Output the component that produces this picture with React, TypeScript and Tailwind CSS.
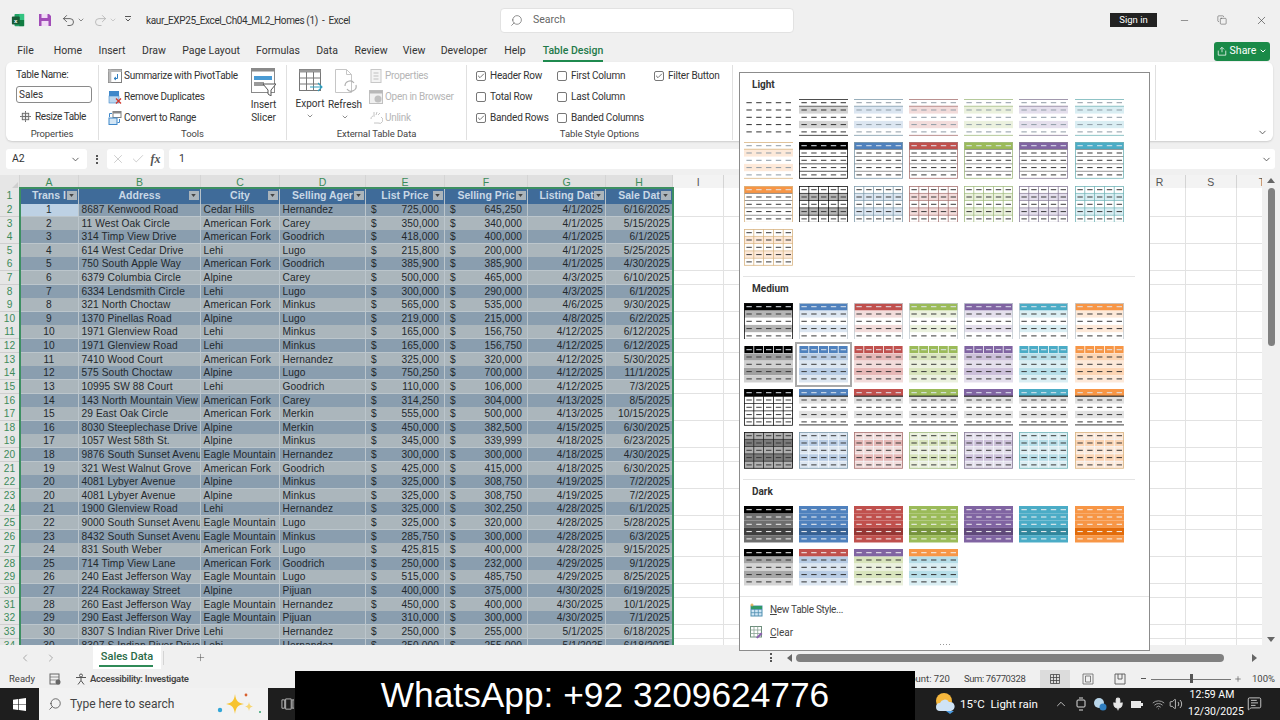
import { ChevronDown, ChevronLeft, ChevronRight, Check, Minus, Plus, Search, Undo2, Redo2, X, Copy, ChevronUp, Mic, Volume2, Wifi, MessageSquareText } from 'lucide-react';

type Row = [string, string, string, string, string, string, string, string];

const rows: Row[] = [
  ['1', '8687 Kenwood Road', 'Cedar Hills', 'Hernandez', '725,000', '645,250', '4/1/2025', '6/16/2025'],
  ['2', '11 West Oak Circle', 'American Fork', 'Carey', '350,000', '340,000', '4/1/2025', '5/15/2025'],
  ['3', '314 Timp View Drive', 'American Fork', 'Goodrich', '418,000', '400,000', '4/1/2025', '6/1/2025'],
  ['4', '614 West Cedar Drive', 'Lehi', 'Lugo', '215,800', '200,000', '4/1/2025', '5/25/2025'],
  ['5', '750 South Apple Way', 'American Fork', 'Goodrich', '385,900', '385,900', '4/1/2025', '4/30/2025'],
  ['6', '6379 Columbia Circle', 'Alpine', 'Carey', '500,000', '465,000', '4/3/2025', '6/10/2025'],
  ['7', '6334 Lendsmith Circle', 'Lehi', 'Lugo', '300,000', '290,000', '4/3/2025', '6/1/2025'],
  ['8', '321 North Choctaw', 'American Fork', 'Minkus', '565,000', '535,000', '4/6/2025', '9/30/2025'],
  ['9', '1370 Pinellas Road', 'Alpine', 'Lugo', '219,000', '215,000', '4/8/2025', '6/2/2025'],
  ['10', '1971 Glenview Road', 'Lehi', 'Minkus', '165,000', '156,750', '4/12/2025', '6/12/2025'],
  ['10', '1971 Glenview Road', 'Lehi', 'Minkus', '165,000', '156,750', '4/12/2025', '6/12/2025'],
  ['11', '7410 Wood Court', 'American Fork', 'Hernandez', '325,000', '320,000', '4/12/2025', '5/30/2025'],
  ['12', '575 South Choctaw', 'Alpine', 'Lugo', '750,250', '700,000', '4/12/2025', '11/1/2025'],
  ['13', '10995 SW 88 Court', 'Lehi', 'Goodrich', '110,000', '106,000', '4/12/2025', '7/3/2025'],
  ['14', '143 North Mountain View', 'American Fork', 'Carey', '314,250', '304,000', '4/13/2025', '8/5/2025'],
  ['15', '29 East Oak Circle', 'American Fork', 'Merkin', '555,000', '500,000', '4/13/2025', '10/15/2025'],
  ['16', '8030 Steeplechase Drive', 'Alpine', 'Merkin', '450,000', '382,500', '4/15/2025', '6/30/2025'],
  ['17', '1057 West 58th St.', 'Alpine', 'Minkus', '345,000', '339,999', '4/18/2025', '6/23/2025'],
  ['18', '9876 South Sunset Avenue', 'Eagle Mountain', 'Hernandez', '300,000', '300,000', '4/18/2025', '4/30/2025'],
  ['19', '321 West Walnut Grove', 'American Fork', 'Goodrich', '425,000', '415,000', '4/18/2025', '6/30/2025'],
  ['20', '4081 Lybyer Avenue', 'Alpine', 'Minkus', '325,000', '308,750', '4/19/2025', '7/2/2025'],
  ['20', '4081 Lybyer Avenue', 'Alpine', 'Minkus', '325,000', '308,750', '4/19/2025', '7/2/2025'],
  ['21', '1900 Glenview Road', 'Lehi', 'Hernandez', '325,000', '302,250', '4/28/2025', '6/1/2025'],
  ['22', '9000 South Sunset Avenue', 'Eagle Mountain', 'Lugo', '325,000', '320,000', '4/28/2025', '5/28/2025'],
  ['23', '8432 South Sunset Avenue', 'Eagle Mountain', 'Minkus', '285,750', '300,000', '4/28/2025', '6/3/2025'],
  ['24', '831 South Weber', 'American Fork', 'Lugo', '425,815', '400,000', '4/28/2025', '9/15/2025'],
  ['25', '714 Timp View Lane', 'American Fork', 'Goodrich', '250,000', '232,000', '4/29/2025', '9/1/2025'],
  ['26', '240 East Jefferson Way', 'Eagle Mountain', 'Lugo', '515,000', '485,750', '4/29/2025', '8/25/2025'],
  ['27', '224 Rockaway Street', 'Alpine', 'Pijuan', '400,000', '375,000', '4/30/2025', '6/19/2025'],
  ['28', '260 East Jefferson Way', 'Eagle Mountain', 'Hernandez', '450,000', '400,000', '4/30/2025', '10/1/2025'],
  ['29', '290 East Jefferson Way', 'Eagle Mountain', 'Pijuan', '310,000', '300,000', '4/30/2025', '7/1/2025'],
  ['30', '8307 S Indian River Drive', 'Lehi', 'Hernandez', '250,000', '255,000', '5/1/2025', '6/18/2025'],
  ['30', '8307 S Indian River Drive', 'Lehi', 'Hernandez', '250,000', '255,000', '5/1/2025', '6/18/2025'],
];

const gridCols = 'grid grid-cols-[20px_59px_122px_79px_86px_79px_83px_78px_67px_repeat(12,51.27px)]';
const emptyCols = Array.from({ length: 12 }, (_, i) => i);

/* ---------- table style thumbnails ---------- */

type Kind = 'plain' | 'lightBand' | 'lightHead' | 'lightGrid' | 'blackGrid' | 'medBand' | 'medCell' | 'medTop' | 'medGrid' | 'dark' | 'darkAlt';
type Accent = 'black' | 'blue' | 'red' | 'green' | 'purple' | 'teal' | 'orange';

const palette: Record<Accent, { main: string; tint: string; deep: string; body: string; band: string; edge: string }> = {
  black: { main: '#000000', tint: '#d4d4d4', deep: '#a6a6a6', body: '#6e6e6e', band: '#3f3f3f', edge: '#111111' },
  blue: { main: '#4f81bd', tint: '#dce6f1', deep: '#b8cce4', body: '#4f81bd', band: '#366092', edge: '#7f9aaa' },
  red: { main: '#c0504d', tint: '#f2dcdb', deep: '#e6b8b7', body: '#c0504d', band: '#963634', edge: '#a87573' },
  green: { main: '#9bbb59', tint: '#ebf1de', deep: '#d8e4bc', body: '#9bbb59', band: '#76933c', edge: '#a3bc82' },
  purple: { main: '#8064a2', tint: '#e4dfec', deep: '#ccc0da', body: '#8064a2', band: '#60497a', edge: '#8a7f99' },
  teal: { main: '#4bacc6', tint: '#daeef3', deep: '#b7dee8', body: '#4bacc6', band: '#31869b', edge: '#74b5b8' },
  orange: { main: '#f79646', tint: '#fde9d9', deep: '#fcd5b4', body: '#f79646', band: '#e26b0a', edge: '#d9b583' },
};

const rowY = [0, 7.3, 14.6, 21.9, 29.2];
const dashX = [2.4, 12.2, 22, 31.8, 41.6];

function Thumb({ kind, accent, headOverride, bodyOverride }: { kind: Kind; accent: Accent; headOverride?: Accent; bodyOverride?: Accent }) {
  const p = palette[accent];
  const head = palette[headOverride ?? accent].main;
  const b = palette[bodyOverride ?? accent];
  const isBlack = accent === 'black';
  const outline = p.edge;
  const parts: React.ReactNode[] = [];

  const fill = (i: number, color: string) =>
    parts.push(<rect key={`f${i}-${color}`} x="0" y={rowY[i]} width="49" height="7.3" fill={color} />);

  let dash = '#3a3a3a';
  let headDash = '#dfe7ef';

  if (kind === 'lightBand') {
    fill(1, p.tint);
    fill(3, p.tint);
    dash = isBlack ? '#333333' : '#8f9ca6';
    headDash = dash;
    parts.push(<rect key="t" x="0" y="0" width="49" height="0.8" fill={isBlack ? '#222222' : p.edge} />);
    parts.push(<rect key="u" x="0" y="6.8" width="49" height="0.8" fill={isBlack ? '#444444' : p.edge} />);
    parts.push(<rect key="b" x="0" y="35.9" width="49" height="0.8" fill={isBlack ? '#222222' : p.edge} />);
  }
  if (kind === 'medBand' || kind === 'lightGrid') {
    fill(1, isBlack ? '#b5b5b5' : p.tint);
    fill(3, isBlack ? '#b5b5b5' : p.tint);
  }
  if (kind === 'medTop') {
    fill(1, '#e2e2e2');
    fill(3, '#e2e2e2');
  }
  if (kind === 'medGrid') {
    [0, 2, 4].forEach((i) => fill(i, isBlack ? '#b0b0b0' : p.tint));
    [1, 3].forEach((i) => fill(i, isBlack ? '#7a7a7a' : p.deep));
  }
  if (kind === 'medCell') {
    [1, 3].forEach((i) => fill(i, isBlack ? '#a0a0a0' : p.deep));
    [2, 4].forEach((i) => fill(i, isBlack ? '#d0d0d0' : p.tint));
  }
  if (kind === 'lightHead' || kind === 'medBand' || kind === 'medTop' || kind === 'blackGrid') {
    fill(0, head);
    if (kind === 'medTop') {
      parts.push(<rect key="tt" x="0" y="6.6" width="49" height="1.2" fill="#333333" />);
      parts.push(<rect key="tb" x="0" y="35" width="49" height="1.7" fill="#8a8a8a" />);
    }
  }
  if (kind === 'dark') {
    fill(1, b.body);
    fill(2, b.body);
    fill(3, b.band);
    fill(4, b.body);
    fill(0, head);
    dash = '#f2f2f2';
  }
  if (kind === 'darkAlt') {
    fill(1, b.deep);
    fill(2, b.tint);
    fill(3, b.deep);
    fill(4, b.tint);
    fill(0, head);
    dash = '#333333';
  }
  if (kind === 'lightHead' || kind === 'lightGrid' || kind === 'blackGrid') {
    [7.3, 14.6, 21.9, 29.2].forEach((y) =>
      parts.push(<rect key={`h${y}`} x="0" y={y - 0.35} width="49" height="0.7" fill={isBlack ? '#111111' : kind === 'lightHead' ? '#6d6d6d' : outline} />),
    );
  }
  if (kind === 'lightGrid' || kind === 'medGrid' || kind === 'blackGrid') {
    [9.8, 19.6, 29.4, 39.2].forEach((x) =>
      parts.push(
        <rect key={`v${x}`} x={x - 0.4} y="0" width="0.8" height="36.6" fill={kind === 'medGrid' ? (isBlack ? '#222222' : '#f4f8fb') : isBlack ? '#111111' : outline} />,
      ),
    );
  }
  if (kind === 'medGrid') {
    [7.3, 14.6, 21.9, 29.2].forEach((y) =>
      parts.push(<rect key={`h${y}`} x="0" y={y - 0.35} width="49" height="0.7" fill={isBlack ? '#222222' : '#f4f8fb'} />),
    );
  }
  if (kind === 'medCell') {
    [0, 1, 2, 3, 4].forEach((c) =>
      parts.push(<rect key={`hc${c}`} x={c * 9.8 + 0.4} y="0" width="9" height="7" fill={head} />),
    );
  }

  const lines: React.ReactNode[] = [];
  rowY.forEach((y, r) => {
    dashX.forEach((x, c) => {
      let color = dash;
      if (r === 0 && (kind === 'lightHead' || kind === 'medBand' || kind === 'medTop' || kind === 'medCell' || kind === 'blackGrid' || kind === 'lightBand')) color = headDash;
      if (kind === 'plain') color = '#333333';
      if (r === 0 && (kind === 'dark' || kind === 'darkAlt')) color = '#f2f2f2';
      lines.push(<rect key={`d${r}-${c}`} x={x} y={y + 3.2} width="5.4" height="1" fill={color} />);
    });
  });

  const boxed = kind === 'lightHead' || kind === 'lightGrid' || kind === 'medBand' || kind === 'medGrid' || kind === 'blackGrid';
  return (
    <svg viewBox="0 0 49 36.7" className="w-[49px] h-[36.7px] block">
      {parts}
      {lines}
      {boxed && (
        <rect x="0.4" y="0.4" width="48.2" height="35.9" fill="none" stroke={isBlack ? '#111111' : kind === 'medBand' ? '#c4ccd2' : outline} strokeWidth="0.8" />
      )}
    </svg>
  );
}

const accents1: Accent[] = ['black', 'blue', 'red', 'green', 'purple', 'teal', 'orange'];

function ThumbGrid({ children }: { children: React.ReactNode }) {
  return <div className="grid grid-cols-[repeat(7,49px)] gap-x-[6.2px] gap-y-[6.6px] pl-[3.5px]">{children}</div>;
}

function GalleryLabel({ text }: { text: string }) {
  return <div className="h-[26px] pl-[12px] pt-[5px] text-[10px] leading-[14px] font-bold text-[#333]">{text}</div>;
}

function Gallery() {
  // 22 light styles: the last band style and the last two sets wrap onto the next line
  const light = [
    <Thumb key="p" kind="plain" accent="black" />,
    ...accents1.map((a) => <Thumb key={`b${a}`} kind="lightBand" accent={a} />),
    ...accents1.map((a) => <Thumb key={`h${a}`} kind="lightHead" accent={a} />),
    ...accents1.map((a) => <Thumb key={`g${a}`} kind="lightGrid" accent={a} />),
  ];
  const medium = [
    ...accents1.map((a) => <Thumb key={`mb${a}`} kind="medBand" accent={a} />),
    ...accents1.map((a) =>
      a === 'blue' ? (
        <div key={`mc${a}`} className="outline-2 outline-offset-[2px] outline-[#a9a9a9]">
          <Thumb kind="medCell" accent={a} />
        </div>
      ) : (
        <Thumb key={`mc${a}`} kind="medCell" accent={a} />
      ),
    ),
    <Thumb key="mtk" kind="blackGrid" accent="black" />,
    ...accents1.slice(1).map((a) => <Thumb key={`mt${a}`} kind="medTop" accent={a} />),
    ...accents1.map((a) => <Thumb key={`mg${a}`} kind="medGrid" accent={a} />),
  ];

  return (
    <div className="absolute left-[739px] top-[72px] w-[411px] h-[579px] bg-white border border-[#8c8c8c] flex flex-col z-20">
      <GalleryLabel text="Light" />
      <ThumbGrid>{light}</ThumbGrid>
      <div className="mt-[10px] ml-[3px] w-[392px] h-px bg-[#e4e4e4]" />
      <GalleryLabel text="Medium" />
      <ThumbGrid>{medium}</ThumbGrid>
      <div className="mt-[10px] ml-[3px] w-[392px] h-px bg-[#e4e4e4]" />
      <GalleryLabel text="Dark" />
      <ThumbGrid>
        {accents1.map((a) => (
          <Thumb key={`d${a}`} kind="dark" accent={a} />
        ))}
        <Thumb kind="darkAlt" accent="black" />
        <Thumb kind="darkAlt" accent="blue" headOverride="red" />
        <Thumb kind="darkAlt" accent="green" headOverride="purple" />
        <Thumb kind="darkAlt" accent="teal" headOverride="orange" />
      </ThumbGrid>
      <div className="mt-[10px] h-px bg-[#e4e4e4]" />
      <div className="h-[23px] flex items-center pl-[9px] gap-[7px] text-[10px] tracking-[-0.3px] text-[#444] mt-px">
        <NewStyleIcon />
        <span>
          <span className="underline">N</span>ew Table Style...
        </span>
      </div>
      <div className="h-[22px] flex items-center pl-[9px] gap-[7px] text-[10px] text-[#444]">
        <ClearIcon />
        <span>
          <span className="underline">C</span>lear
        </span>
      </div>
      <div className="flex justify-center gap-[2px] pt-[1px] pl-[1px]">
        {[0, 1, 2, 3].map((i) => (
          <div key={i} className="w-px h-px bg-[#999]" />
        ))}
      </div>
    </div>
  );
}

/* ---------- small drawings ---------- */

function NewStyleIcon() {
  return (
    <svg viewBox="0 0 14 14" className="w-[14px] h-[14px]">
      <rect x="2" y="3" width="11" height="10" fill="#cfe6f5" stroke="#4f8fb0" />
      <path d="M2 6.5h11M2 9.7h11M5.7 3v10M9.3 3v10" stroke="#4f8fb0" strokeWidth="0.8" />
      <rect x="2" y="3" width="11" height="3" fill="#2f9a66" />
      <path d="M3 0.5v3M1.5 2h3" stroke="#d8a038" strokeWidth="1" />
    </svg>
  );
}

function ClearIcon() {
  return (
    <svg viewBox="0 0 14 14" className="w-[14px] h-[14px]">
      <rect x="1.5" y="1.5" width="11" height="10.5" fill="#fff" stroke="#6f8f7d" />
      <path d="M1.5 5h11M1.5 8.5h11M5 1.5v10.5M8.7 1.5v10.5" stroke="#8aa396" strokeWidth="0.8" />
      <path d="M7 12.5l5-5 1.5 1.5-5 4.5z" fill="#8a5fb0" />
    </svg>
  );
}

function FilterButton() {
  return (
    <div className="absolute right-[1.5px] top-[2.5px] w-[10px] h-[9.5px] bg-[#aab4bb] flex items-center justify-center">
      <svg viewBox="0 0 6 4" className="w-[5px] h-[3px]">
        <path d="M0 0h6L3 4z" fill="#444" />
      </svg>
    </div>
  );
}

function ExcelLogo() {
  return (
    <svg viewBox="0 0 16 16" className="w-[14px] h-[14px]">
      <rect x="4" y="1" width="11" height="14" rx="1" fill="#21a366" />
      <rect x="9.5" y="1" width="5.5" height="7" fill="#33c481" />
      <rect x="9.5" y="8" width="5.5" height="7" fill="#107c41" />
      <rect x="1" y="4" width="9" height="9" rx="1" fill="#185c37" />
      <text x="5.5" y="11" textAnchor="middle" fontSize="7" fontWeight="700" fill="#fff" fontFamily="Liberation Sans, sans-serif">x</text>
    </svg>
  );
}

function SaveIcon() {
  return (
    <svg viewBox="0 0 14 14" className="w-[14px] h-[14px]">
      <path d="M1 1h10l2 2v10H1z" fill="#a24db8" />
      <rect x="3.5" y="1" width="6" height="4" fill="#f1dbf5" />
      <rect x="3.5" y="8" width="7" height="5" fill="#f1dbf5" />
    </svg>
  );
}

function PivotIcon() {
  return (
    <svg viewBox="0 0 14 14" className="w-[14px] h-[14px]">
      <rect x="0.5" y="0.5" width="13" height="13" fill="#fff" stroke="#7f7f7f" />
      <rect x="0.5" y="0.5" width="13" height="2.5" fill="#b9b9b9" />
      <rect x="0.5" y="0.5" width="2.8" height="13" fill="#b9b9b9" />
      <path d="M9.5 5v4.5H6M8 8l-2 1.5L8 11" stroke="#2f7fc1" fill="none" />
    </svg>
  );
}

function DuplicatesIcon() {
  return (
    <svg viewBox="0 0 14 14" className="w-[14px] h-[14px]">
      <rect x="1" y="1" width="10" height="5" fill="#3f87c9" />
      <rect x="1" y="6" width="10" height="7" fill="#bcd7ee" stroke="#3f87c9" strokeWidth="0.6" />
      <path d="M8 8.5l5 5M13 8.5l-5 5" stroke="#d13a2f" strokeWidth="1.4" />
    </svg>
  );
}

function ConvertIcon() {
  return (
    <svg viewBox="0 0 14 14" className="w-[14px] h-[14px]">
      <rect x="5" y="0.5" width="8" height="6" fill="#fff" stroke="#7f7f7f" />
      <rect x="5" y="0.5" width="8" height="2" fill="#8a8a8a" />
      <rect x="1" y="7" width="8" height="6.5" fill="#d3e6f5" stroke="#3f87c9" />
      <path d="M1.5 6V2.5H4M11.5 8v3.5H9.5" stroke="#3f87c9" fill="none" />
    </svg>
  );
}

function ResizeIcon() {
  return (
    <svg viewBox="0 0 12 12" className="w-[11px] h-[11px]">
      <rect x="2.5" y="2.5" width="7" height="7" fill="#e8e8e8" stroke="#666" />
      <path d="M2.5 6h7M6 2.5v7M6 0v2M6 10v2M0 6h2M10 6h2" stroke="#666" />
    </svg>
  );
}

function SlicerIcon() {
  return (
    <svg viewBox="0 0 25 28" className="w-[25px] h-[28px]">
      <rect x="0.5" y="0.5" width="23" height="24" fill="#fff" stroke="#8a8a8a" />
      <rect x="0.5" y="0.5" width="23" height="3" fill="#8a8a8a" />
      <rect x="3" y="8" width="18" height="4" fill="#4a9bd4" />
      <rect x="3" y="14" width="10" height="4" fill="#9a9a9a" />
      <path d="M12 16h13l-5 6v6l-3-2v-4z" fill="#fff" stroke="#555" />
    </svg>
  );
}

function ExportIcon() {
  return (
    <svg viewBox="0 0 26 26" className="w-[26px] h-[26px]">
      <rect x="2.5" y="1.5" width="21" height="21" fill="#fff" stroke="#777" />
      <rect x="2.5" y="1.5" width="21" height="3" fill="#9a9a9a" />
      <path d="M2.5 10h21M2.5 16h21M9.5 4v18M16.5 4v18" stroke="#777" />
      <path d="M13 19h12M21 15l4 4-4 4" stroke="#2f9fbf" fill="none" strokeWidth="1.1" />
    </svg>
  );
}

function RefreshIcon() {
  return (
    <svg viewBox="0 0 26 28" className="w-[26px] h-[28px]">
      <path d="M3.5 1.5h11l5 5v18h-16z" fill="#fff" stroke="#c6c6c6" />
      <path d="M14.5 1.5v5h5" fill="none" stroke="#c6c6c6" />
      <path d="M13 18a5 5 0 0 1 9-3M24 17a5 5 0 0 1-9 4" fill="none" stroke="#b0b0b0" strokeWidth="1.2" />
    </svg>
  );
}

function DisabledDocIcon({ variant }: { variant: 'props' | 'browser' | 'unlink' }) {
  return (
    <svg viewBox="0 0 14 14" className="w-[14px] h-[14px]">
      {variant === 'props' && (
        <>
          <rect x="2" y="0.5" width="10" height="13" fill="#f4f4f4" stroke="#c8c8c8" />
          <path d="M4.5 4h5M4.5 7h5M4.5 10h5" stroke="#c0c0c0" />
        </>
      )}
      {variant === 'browser' && (
        <>
          <rect x="0.5" y="0.5" width="13" height="13" fill="#f0f0f0" stroke="#c0c0c0" />
          <rect x="0.5" y="0.5" width="13" height="3" fill="#b8b8b8" />
          <circle cx="9" cy="9" r="3.5" fill="#c0c0c0" />
        </>
      )}
      {variant === 'unlink' && (
        <path d="M2 8a3 3 0 0 1 4-3M12 6a3 3 0 0 1-3 6H5M5 1v3M8 1l-1 3M11 2L9 4" fill="none" stroke="#c4c4c4" />
      )}
    </svg>
  );
}

function WinLogo() {
  return (
    <svg viewBox="0 0 14 14" className="w-[13px] h-[13px]">
      <path d="M0 1.9l5.7-.8v5.5H0zM6.4 1l7.6-1v6.6H6.4zM0 7.4h5.7v5.5L0 12.1zM6.4 7.4H14V14l-7.6-1z" fill="#fff" />
    </svg>
  );
}

function Sparkle() {
  return (
    <svg viewBox="0 0 46 26" className="w-[46px] h-[26px]">
      <path d="M20 3c1 7 3 9 9 10-6 1-8 3-9 10-1-7-3-9-9-10 6-1 8-3 9-10z" fill="#f7c32e" />
      <path d="M34 11c.5 3 1.5 4 4 4.5-2.5.5-3.5 1.5-4 4.5-.5-3-1.5-4-4-4.5 2.5-.5 3.5-1.5 4-4.5z" fill="#f7d774" />
      <circle cx="5" cy="19" r="2.2" fill="#32a6d8" />
      <circle cx="31" cy="4" r="1.4" fill="#d8602e" />
      <circle cx="45" cy="21" r="1" fill="#32a070" />
    </svg>
  );
}

function WeatherIcon() {
  return (
    <svg viewBox="0 0 20 22" className="w-[20px] h-[22px]">
      <circle cx="9" cy="9" r="8" fill="#f6b73c" />
      <path d="M5 19a4 4 0 0 1 0-8 5 5 0 0 1 9-1 4.5 4.5 0 0 1 2 9z" fill="#cfe3f5" />
      <path d="M11 19h8l-4 3z" fill="#4a9be0" />
    </svg>
  );
}

/* ---------- ribbon bits ---------- */

function RibbonCheck({ on, label }: { on?: boolean; label: string }) {
  return (
    <div className="h-[21px] flex items-center gap-[4px] text-[10px] tracking-[-0.2px] text-[#333] whitespace-nowrap">
      <div className="w-[10px] h-[10px] rounded-[2px] border border-[#777] bg-white flex items-center justify-center">
        {on && <Check size={8} strokeWidth={2} className="text-[#333]" />}
      </div>
      {label}
    </div>
  );
}

function GroupLabel({ children }: { children: React.ReactNode }) {
  return <div className="absolute -bottom-[1px] inset-x-0 text-center text-[9.5px] leading-[14px] tracking-[-0.1px] text-[#444]">{children}</div>;
}

function IconRow({ icon, label, disabled }: { icon: React.ReactNode; label: string; disabled?: boolean }) {
  return (
    <div className={`h-[21px] flex items-center gap-[2px] text-[10px] tracking-[-0.28px] whitespace-nowrap ${disabled ? 'text-[#b5b5b5]' : 'text-[#333]'}`}>
      {icon}
      {label}
    </div>
  );
}

const tabs: [string, string][] = [
  ['File', 'w-[37px]'],
  ['Home', 'w-[48px]'],
  ['Insert', 'w-[40px]'],
  ['Draw', 'w-[44px]'],
  ['Page Layout', 'w-[70px]'],
  ['Formulas', 'w-[64px]'],
  ['Data', 'w-[34px]'],
  ['Review', 'w-[54px]'],
  ['View', 'w-[32px]'],
  ['Developer', 'w-[68px]'],
  ['Help', 'w-[34px]'],
];

function ColHead({ letter, active }: { letter: string; active?: boolean }) {
  return (
    <div className={`flex items-center justify-center text-[10.5px] border-r border-[#d4d4d4] ${active ? 'bg-[#e0e0e0] text-[#3d8b5b]' : 'bg-[#f3f3f3] text-[#555]'}`}>
      {letter}
    </div>
  );
}

export default function App() {
  return (
    <div className="relative w-[1280px] h-[720px] overflow-hidden bg-[#f0f0f0] flex flex-col font-['Roboto',sans-serif]">
      {/* Title bar */}
      <div className="h-[40px] flex items-center shrink-0 text-[#333] pl-[11px]">
        <ExcelLogo />
        <div className="ml-[13px]">
          <SaveIcon />
        </div>
        <Undo2 size={15} className="ml-[8.5px] text-[#555]" strokeWidth={1.4} />
        <ChevronDown size={8} className="ml-[1px] text-[#555]" />
        <Redo2 size={15} className="ml-[8px] text-[#b5b5b5]" strokeWidth={1.4} />
        <ChevronDown size={8} className="ml-[1px] text-[#b5b5b5]" />
        <div className="ml-[7.5px] w-[8px] flex flex-col items-center gap-[1px]">
          <div className="w-[6px] h-px bg-[#555]" />
          <ChevronDown size={8} className="text-[#555] -mt-[2px]" strokeWidth={3} />
        </div>
        <div className="ml-[14px] w-[354px] shrink-0 text-[10px] tracking-[-0.38px] whitespace-pre">kaur_EXP25_Excel_Ch04_ML2_Homes (1)  -  Excel</div>
        <div className="w-[294px] h-[25px] shrink-0 bg-white border border-[#e2e2e2] rounded-[4px] flex items-center pl-[9px] gap-[10px] text-[#666] text-[10.5px]">
          <Search size={13} strokeWidth={1.3} className="-scale-x-100" />
          Search
        </div>
        <div className="ml-[316px] w-[47px] h-[14px] shrink-0 bg-[#222] text-white text-[9.5px] flex items-center justify-center">Sign in</div>
        <Minus size={11} strokeWidth={1.2} className="ml-[21.5px] text-[#444]" />
        <Copy size={10} strokeWidth={1.2} className="ml-[27.5px] text-[#444]" />
        <X size={13} strokeWidth={1.2} className="ml-[27.5px] text-[#444]" />
      </div>

      {/* Tabs */}
      <div className="h-[22px] flex items-center shrink-0 relative text-[10.5px] text-[#333] whitespace-nowrap">
        <div className="w-[7px]" />
        {tabs.map(([t, w]) => (
          <div key={t} className={`${w} text-center`}>
            {t}
          </div>
        ))}
        <div className="ml-[11px] w-[60px] h-[22px] flex flex-col items-center justify-center relative text-[#1f7a4a] font-medium">
          Table Design
          <div className="absolute bottom-0 inset-x-0 h-[2px] bg-[#1f8a4f]" />
        </div>
        <div className="ml-[611px] w-[56px] h-[19px] rounded-[3px] bg-[#1a8a48] text-white flex items-center justify-center gap-[3px] text-[10.5px]">
          <svg viewBox="0 0 12 12" className="w-[10px] h-[10px]">
            <path d="M1.5 5.5v5.5h9V5.5M6 7.5V2M3.5 4L6 1.5 8.5 4" fill="none" stroke="#fff" strokeWidth="0.9" />
          </svg>
          Share
          <ChevronDown size={8} strokeWidth={3} />
        </div>
      </div>

      {/* Ribbon */}
      <div className="mx-[6px] w-[1267px] h-[79px] shrink-0 bg-white rounded-[6px] shadow-[0_1px_2px_rgba(0,0,0,0.15)] flex pt-[3px]">
        {/* Properties */}
        <div className="relative w-[93px] h-[75px] border-r border-[#e0e0e0] pl-[10px] text-[10px] text-[#333]">
          <div className="h-[18px] flex items-center tracking-[-0.3px]">Table Name:</div>
          <div className="mt-[3px] w-[76px] h-[17px] border border-[#8a8a8a] rounded-[3px] px-[2px] flex items-center">Sales</div>
          <div className="mt-[3px] h-[20px] pl-[4px] flex items-center gap-[4px] tracking-[-0.4px]">
            <ResizeIcon />
            Resize Table
          </div>
          <GroupLabel>Properties</GroupLabel>
        </div>
        {/* Tools */}
        <div className="relative w-[188px] h-[75px] border-r border-[#e0e0e0] pl-[9px] flex">
          <div className="flex flex-col">
            <IconRow icon={<PivotIcon />} label="Summarize with PivotTable" />
            <IconRow icon={<DuplicatesIcon />} label="Remove Duplicates" />
            <IconRow icon={<ConvertIcon />} label="Convert to Range" />
          </div>
          <div className="absolute left-[152px] top-[3px] w-[25px] flex flex-col items-center text-[10px] leading-[13px] text-[#333]">
            <SlicerIcon />
            <div className="mt-[2px]">Insert</div>
            <div>Slicer</div>
          </div>
          <GroupLabel>Tools</GroupLabel>
        </div>
        {/* External Table Data */}
        <div className="relative w-[180px] h-[75px] border-r border-[#e0e0e0] text-[10px] text-[#333] flex">
          <div className="w-[46px] pt-[3px] flex flex-col items-center leading-[13px]">
            <ExportIcon />
            <div className="mt-[3px]">Export</div>
            <ChevronDown size={8} strokeWidth={2} className="mt-[2px] text-[#555]" />
          </div>
          <div className="w-[36px] pt-[3px] flex flex-col items-center leading-[13px] -ml-[6px]">
            <RefreshIcon />
            <div className="mt-[2px]">Refresh</div>
            <ChevronDown size={8} strokeWidth={2} className="mt-[2px] text-[#555]" />
          </div>
          <div className="ml-[6px] flex flex-col">
            <IconRow disabled icon={<DisabledDocIcon variant="props" />} label="Properties" />
            <IconRow disabled icon={<DisabledDocIcon variant="browser" />} label="Open in Browser" />
            <IconRow disabled icon={<DisabledDocIcon variant="unlink" />} label="Unlink" />
          </div>
          <GroupLabel>External Table Data</GroupLabel>
        </div>
        {/* Table Style Options */}
        <div className="relative w-[266px] h-[75px] border-r border-[#e0e0e0] pl-[9px] flex">
          <div className="w-[81px] flex flex-col">
            <RibbonCheck on label="Header Row" />
            <RibbonCheck label="Total Row" />
            <RibbonCheck on label="Banded Rows" />
          </div>
          <div className="w-[97px] flex flex-col">
            <RibbonCheck label="First Column" />
            <RibbonCheck label="Last Column" />
            <RibbonCheck label="Banded Columns" />
          </div>
          <div className="flex flex-col">
            <RibbonCheck on label="Filter Button" />
          </div>
          <GroupLabel>Table Style Options</GroupLabel>
        </div>
        {/* gallery slot */}
        <div className="w-[423px] h-[75px] border-r border-[#e0e0e0]" />
        <div className="flex-1 flex items-end justify-end pb-[3px] pr-[5px]">
          <ChevronDown size={11} className="text-[#555]" />
        </div>
      </div>

      {/* Formula bar */}
      <div className="mt-[8px] h-[20px] shrink-0 flex items-stretch pl-[6px] gap-[5px] text-[10.5px] text-[#333]">
        <div className="w-[81px] bg-white rounded-[3px] flex items-center justify-between px-[6px]">
          A2
          <ChevronDown size={11} className="text-[#555]" />
        </div>
        <div className="w-[10px] flex flex-col items-center justify-center gap-[1.5px]">
          <div className="w-[2px] h-[2px] bg-[#555]" />
          <div className="w-[2px] h-[2px] bg-[#555]" />
          <div className="w-[2px] h-[2px] bg-[#555]" />
        </div>
        <div className="w-[57px] bg-white rounded-[3px] flex items-center justify-center gap-[6px]">
          <X size={14} strokeWidth={1} className="text-[#aaa]" />
          <Check size={14} strokeWidth={1} className="text-[#aaa]" />
          <span className="italic font-bold text-[12px] text-[#555] leading-none font-['Liberation_Serif',serif]">fx</span>
        </div>
        <div className="w-[1106px] bg-white rounded-[3px] flex items-center justify-between px-[10px] pr-[3px]">
          1
          <ChevronDown size={11} className="text-[#555]" />
        </div>
      </div>

      {/* Sheet */}
      <div className="relative mt-[6px] h-[470px] shrink-0 flex overflow-hidden font-['Liberation_Sans',sans-serif]">
        <div className="w-[1262px] overflow-hidden relative">
          <div className={`${gridCols} h-[13px]`}>
            <div className="bg-[#e6e6e6] border-r border-[#d4d4d4] flex items-end justify-end p-[1px]">
              <div className="w-0 h-0 border-l-[8px] border-l-transparent border-b-[8px] border-b-[#cfcfcf]" />
            </div>
            {['A', 'B', 'C', 'D', 'E', 'F', 'G', 'H'].map((c) => (
              <ColHead key={c} letter={c} active />
            ))}
            {['I', 'J', 'K', 'L', 'M', 'N', 'O', 'P', 'Q', 'R', 'S', 'T'].map((c) => (
              <ColHead key={c} letter={c} />
            ))}
          </div>
          {/* Header row */}
          <div className={`${gridCols} h-[15px] text-[10.5px] font-bold text-[#c9d8e6]`}>
            <div className="bg-[#e6e6e6] border-r border-[#cfcfcf] text-[#3d8b5b] font-normal flex items-center justify-center text-[10.5px]">1</div>
            {['Trans I', 'Address', 'City', 'Selling Ager', 'List Price', 'Selling Pric', 'Listing Dat', 'Sale Dat'].map((h) => (
              <div key={h} className="relative bg-[#3f6b99] border-r border-[#b6c1ca] flex items-center justify-center overflow-hidden whitespace-nowrap">
                {h}
                <FilterButton />
              </div>
            ))}
            {emptyCols.map((i) => (
              <div key={i} className="bg-white border-r border-b border-[#e2e2e2]" />
            ))}
          </div>
          {/* Data rows */}
          {rows.map((r, i) => (
            <div key={i} className={`${gridCols} h-[13.61px] text-[10.2px] leading-[13px] text-[#23282c] tracking-[0.1px]`}>
              <div className="bg-[#e6e6e6] border-r border-b border-[#cfcfcf] text-[#3d8b5b] flex items-center justify-center tracking-normal">{i + 2}</div>
              {r.map((v, c) => {
                const band = i % 2 === 0 ? 'bg-[#8a9eaf]' : 'bg-[#abb6bc]';
                const selected = i === 0 && c === 0;
                const base = `${selected ? 'bg-[#bdd1e4]' : band} border-r border-b border-[#bcc6cc] overflow-hidden whitespace-nowrap flex items-center`;
                if (c === 0) return <div key={c} className={`${base} justify-center`}>{v}</div>;
                if (c === 4 || c === 5) {
                  return (
                    <div key={c} className={`${base} justify-between pl-[5px] pr-[5px]`}>
                      <span>$</span>
                      <span>{v}</span>
                    </div>
                  );
                }
                if (c >= 6) return <div key={c} className={`${base} justify-end pr-[2px]`}>{v}</div>;
                return <div key={c} className={`${base} pl-[2.5px]`}>{v}</div>;
              })}
              {emptyCols.map((e) => (
                <div key={e} className="bg-white border-r border-b border-[#e2e2e2]" />
              ))}
            </div>
          ))}
          {/* Selected range outline */}
          <div className="absolute left-[19px] top-[12px] w-[655px] h-[470px] border-2 border-[#3d8f62] pointer-events-none" />
        </div>
        {/* Vertical scrollbar */}
        <div className="w-[18px] bg-[#f0f0f0] flex flex-col items-center relative">
          <div className="mt-[3px] w-0 h-0 border-l-[4px] border-l-transparent border-r-[4px] border-r-transparent border-b-[5px] border-b-[#666]" />
          <div className="mt-[5px] w-[7px] h-[158px] rounded-full bg-[#808080]" />
          <div className="mt-auto mb-[3px] w-0 h-0 border-l-[4px] border-l-transparent border-r-[4px] border-r-transparent border-t-[5px] border-t-[#666]" />
        </div>
      </div>

      {/* Sheet tabs and horizontal scroll */}
      <div className="h-[25px] shrink-0 flex items-center relative text-[#555]">
        <ChevronLeft size={12} className="ml-[19px] text-[#aaa]" />
        <ChevronRight size={12} className="ml-[14px] text-[#aaa]" />
        <div className="ml-[36px] w-[68px] h-[23px] bg-white flex flex-col items-center justify-center -mt-[1px] relative text-[11px] font-medium text-[#2b6b48]">
          Sales Data
          <div className="absolute bottom-[2px] left-[6px] right-[8px] h-[2px] bg-[#2f8a58]" />
        </div>
        <div className="ml-[2px] w-px h-[14px] bg-[#d4d4d4]" />
        <Plus size={11} strokeWidth={1.2} className="ml-[31px]" />
        <div className="ml-[564px] flex flex-col gap-[1.5px]">
          <div className="w-[2px] h-[2px] bg-[#555]" />
          <div className="w-[2px] h-[2px] bg-[#555]" />
          <div className="w-[2px] h-[2px] bg-[#555]" />
        </div>
        <div className="ml-[15px] w-0 h-0 border-t-[4px] border-t-transparent border-b-[4px] border-b-transparent border-r-[5px] border-r-[#666]" />
        <div className="ml-[4px] w-[428px] h-[8px] rounded-full bg-[#808080]" />
        <div className="ml-[28px] w-0 h-0 border-t-[4px] border-t-transparent border-b-[4px] border-b-transparent border-l-[5px] border-l-[#666]" />
      </div>

      {/* Status bar */}
      <div className="h-[18px] shrink-0 flex items-center text-[9.5px] text-[#444] relative">
        <div className="ml-[9px] w-[40px]">Ready</div>
        <svg viewBox="0 0 12 12" className="w-[12px] h-[12px]">
          <rect x="1" y="1" width="9" height="10" fill="none" stroke="#666" />
          <path d="M1 4h9M1 7h9" stroke="#666" strokeWidth="0.7" />
          <circle cx="9" cy="9" r="2.5" fill="#666" />
        </svg>
        <svg viewBox="0 0 12 12" className="w-[12px] h-[12px] ml-[14px]">
          <circle cx="6" cy="2.5" r="1.5" fill="none" stroke="#555" />
          <path d="M1 4.5h10M6 4.5v3M6 7.5l-3 4M6 7.5l3 4" stroke="#555" fill="none" />
        </svg>
        <div className="ml-[3px] font-semibold tracking-[-0.3px]">Accessibility: Investigate</div>
        <div className="absolute left-[904px] whitespace-nowrap">Count: 720</div>
        <div className="absolute left-[964px] whitespace-nowrap tracking-[-0.4px]">Sum: 76770328</div>
        <div className="absolute left-[1040px] top-0 w-[30px] h-[18px] bg-[#dcdcdc] flex items-center justify-center">
          <svg viewBox="0 0 12 12" className="w-[12px] h-[12px]">
            <path d="M1.5 1.5h9v9h-9zM1.5 4.5h9M1.5 7.5h9M4.5 1.5v9M7.5 1.5v9" fill="none" stroke="#444" strokeWidth="0.8" />
          </svg>
        </div>
        <div className="absolute left-[1082px] top-[3px]">
          <svg viewBox="0 0 12 12" className="w-[12px] h-[12px]">
            <path d="M1 1h10v10H1zM3.5 3h5v6h-5z" fill="none" stroke="#666" strokeWidth="0.8" />
          </svg>
        </div>
        <div className="absolute left-[1114px] top-[3px]">
          <svg viewBox="0 0 12 12" className="w-[12px] h-[12px]">
            <path d="M1 1h10v10H1zM4 1v5h4V1" fill="none" stroke="#555" strokeWidth="0.9" />
          </svg>
        </div>
        <div className="absolute left-[1141px] top-[8px] w-[5px] h-px bg-[#555]" />
        <div className="absolute left-[1151px] top-[8.5px] w-[80px] h-px bg-[#777]" />
        <div className="absolute left-[1189.5px] top-[4px] w-[3px] h-[9px] bg-[#555]" />
        <Plus size={8} className="absolute left-[1234px] top-[5px] text-[#555]" />
        <div className="absolute left-[1252px] whitespace-nowrap">100%</div>
      </div>

      {/* Taskbar */}
      <div className="h-[32px] shrink-0 bg-[#1e1e1e] flex items-center relative text-white">
        <div className="w-[39px] flex justify-center">
          <WinLogo />
        </div>
        <div className="w-[229px] h-[32px] bg-[#f2f2f2] flex items-center pl-[9px] text-[#444] text-[12px] relative">
          <Search size={14} strokeWidth={1.3} className="-scale-x-100" />
          <span className="ml-[8px]">Type here to search</span>
          <div className="absolute right-[7px] top-[3px]">
            <Sparkle />
          </div>
        </div>
        <svg viewBox="0 0 14 14" className="w-[13px] h-[13px] ml-[13px]">
          <path d="M1 2h3v9H1zM5 1h6v11H5zM12 2h2v9h-2z" fill="none" stroke="#bbb" />
        </svg>
        <div className="absolute left-[935px] top-[4px]">
          <WeatherIcon />
        </div>
        <div className="absolute left-[960px] top-[8px] text-[11.5px] leading-[16px] whitespace-pre">15°C  Light rain</div>
        <ChevronUp size={14} strokeWidth={1.4} className="absolute left-[1054px] top-[9px] text-[#ddd]" />
        <svg viewBox="0 0 10 14" className="absolute left-[1076px] top-[9px] w-[10px] h-[14px]">
          <rect x="1" y="3" width="8" height="7" rx="1" fill="none" stroke="#ddd" />
          <path d="M3 1h4M3 13h4" stroke="#ddd" />
        </svg>
        <svg viewBox="0 0 14 14" className="absolute left-[1093px] top-[9px] w-[14px] h-[14px]">
          <circle cx="6" cy="6" r="5" fill="#b9d6ea" />
          <circle cx="10" cy="10" r="3.5" fill="#2f7fc1" />
        </svg>
        <Mic size={14} className="absolute left-[1111px] top-[9px] text-[#e8e8e8]" fill="#e8e8e8" />
        <svg viewBox="0 0 14 12" className="absolute left-[1130px] top-[10px] w-[14px] h-[12px]">
          <rect x="1" y="3" width="10" height="7" fill="#e8e8e8" />
          <rect x="11" y="5" width="2" height="3" fill="#e8e8e8" />
        </svg>
        <Wifi size={13} className="absolute left-[1152px] top-[10px] text-[#bbb]" strokeWidth={1.5} />
        <Volume2 size={14} className="absolute left-[1169px] top-[9px] text-[#ddd]" strokeWidth={1.4} />
        <div className="absolute left-[1188px] -top-[2px] w-[48px] text-center text-[10.5px] leading-[17px]">
          <div>12:59 AM</div>
          <div>12/30/2025</div>
        </div>
        <MessageSquareText size={15} strokeWidth={1.3} className="absolute left-[1247px] top-[8px] text-[#e8e8e8]" />
      </div>

      <Gallery />

      {/* Video watermark over the bottom of the window */}
      <div className="absolute left-[295px] top-[671px] w-[620px] h-[49px] bg-black text-white flex items-center justify-center text-[35.3px] z-30 whitespace-nowrap font-['Liberation_Sans',sans-serif]">
        WhatsApp: +92 3209624776
      </div>
    </div>
  );
}
